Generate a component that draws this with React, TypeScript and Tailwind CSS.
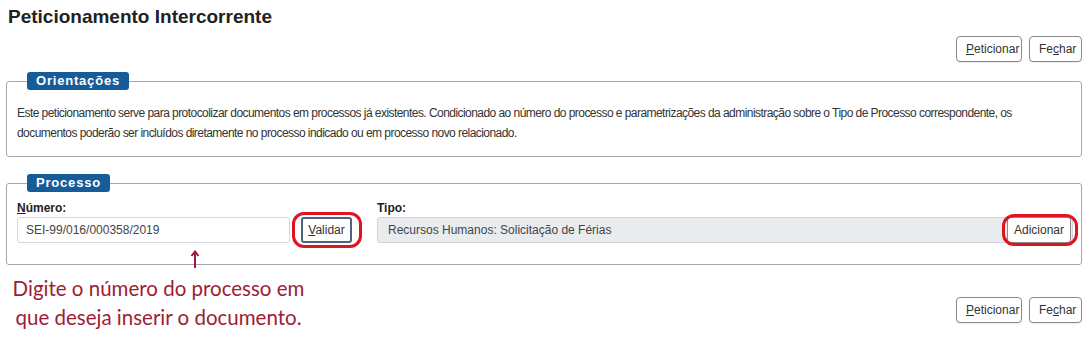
import type { ReactNode } from "react";

const btn =
  "h-[26px] rounded-[4px] border border-[#8a8a8a] bg-white px-[9px] text-[12px] leading-none text-[#333] shadow-[0_1px_1px_rgba(0,0,0,0.08)]";

const ActionButtons = () => (
  <div className="flex justify-end gap-[7px]">
    <button className={`${btn} w-[66px]`}>
      <u>P</u>eticionar
    </button>
    <button className={`${btn} w-[53px]`}>
      Fe<u>c</u>har
    </button>
  </div>
);

const Legend = ({ children }: { children: ReactNode }) => (
  <legend className="ml-[10px] h-[18px] rounded-[3px] bg-[#165c99] px-[9px] text-[13px] font-bold leading-[18px] tracking-[0.8px] text-white">
    {children}
  </legend>
);

export default function App() {
  return (
    <div
      className="w-[1091px] bg-white pl-[6px] pr-[9px] pb-[17px] text-[#333]"
      style={{ fontFamily: '"Liberation Sans", Arial, sans-serif' }}
    >
      <h1 className="pl-[2px] pt-[6px] text-[19px] font-bold leading-[22px] text-[#222]">
        Peticionamento Intercorrente
      </h1>

      <div className="mt-[8px]">
        <ActionButtons />
      </div>

      <fieldset className="mt-[10px] rounded-[3px] border border-[#a6a6a6] pb-[13px] pl-[10px] pr-[10px] pt-[13px]">
        <Legend>Orientações</Legend>
        <p className="text-[12px] leading-[20px] tracking-[-0.55px] text-[#333]">
          Este peticionamento serve para protocolizar documentos em processos já existentes. Condicionado ao número do
          processo e parametrizações da administração sobre o Tipo de Processo correspondente, os
          <br />
          documentos poderão ser incluídos diretamente no processo indicado ou em processo novo relacionado.
        </p>
      </fieldset>

      <div className="relative mt-[17px]">
        <fieldset className="rounded-[3px] border border-[#a6a6a6] pb-[21px] pl-[10px] pr-[8px] pt-[8px]">
          <Legend>Processo</Legend>
          <div className="flex gap-[25px]">
            <div className="w-[335px] shrink-0">
              <label className="block text-[12px] font-bold leading-[16px] text-[#222]">
                <u>N</u>úmero:
              </label>
              <div className="mt-[1px] flex items-center">
                <div className="flex h-[26px] w-[273px] items-center rounded-[3px] border border-[#d4d8dc] bg-white pl-[8px] text-[12px] text-[#444]">
                  SEI-99/016/000358/2019
                </div>
                <div className="relative ml-[11px]">
                  <button className="h-[26px] w-[51px] rounded-[3px] border-2 border-[#4d6382] bg-white text-[12px] leading-none text-[#333]">
                    <u>V</u>alidar
                  </button>
                  <span className="pointer-events-none absolute -bottom-[5px] -left-[9px] -right-[10px] -top-[5px] rounded-[12px] border-[3px] border-[#e0141f]" />
                </div>
              </div>
            </div>
            <div className="flex-1">
              <label className="block text-[12px] font-bold leading-[16px] text-[#222]">Tipo:</label>
              <div className="mt-[1px] flex h-[26px] items-center justify-between rounded-[3px] border border-[#ced4da] bg-[#e9ecef] pl-[10px] pr-[1px] text-[12px] text-[#444]">
                <span>Recursos Humanos: Solicitação de Férias</span>
                <div className="relative">
                  <button className="-my-px h-[26px] w-[64px] rounded-[3px] border border-[#8a8a8a] bg-white text-[12px] leading-none text-[#333]">
                    Adicionar
                  </button>
                  <span className="pointer-events-none absolute -bottom-[4px] -left-[5px] -right-[7px] -top-[4px] rounded-[12px] border-[3px] border-[#e0141f]" />
                </div>
              </div>
            </div>
          </div>
        </fieldset>
        <svg
          className="absolute left-[184px] top-[76px]"
          width="10"
          height="18"
          viewBox="0 0 10 18"
          fill="none"
        >
          <path d="M5 2 L5 18" stroke="#a0193a" strokeWidth="2" />
          <path d="M1.5 6 L5 1.5 L8.5 6" stroke="#a0193a" strokeWidth="2" />
        </svg>
      </div>

      <div className="flex items-start justify-between">
        <div
          className="mt-[9px] w-[305px] text-center text-[20.5px] leading-[29px] text-[#9e1c35]"
          style={{ fontFamily: 'Lato, "Noto Sans", sans-serif' }}
        >
          Digite o número do processo em que deseja inserir o documento.
        </div>
        <div className="mt-[32px]">
          <ActionButtons />
        </div>
      </div>
    </div>
  );
}
